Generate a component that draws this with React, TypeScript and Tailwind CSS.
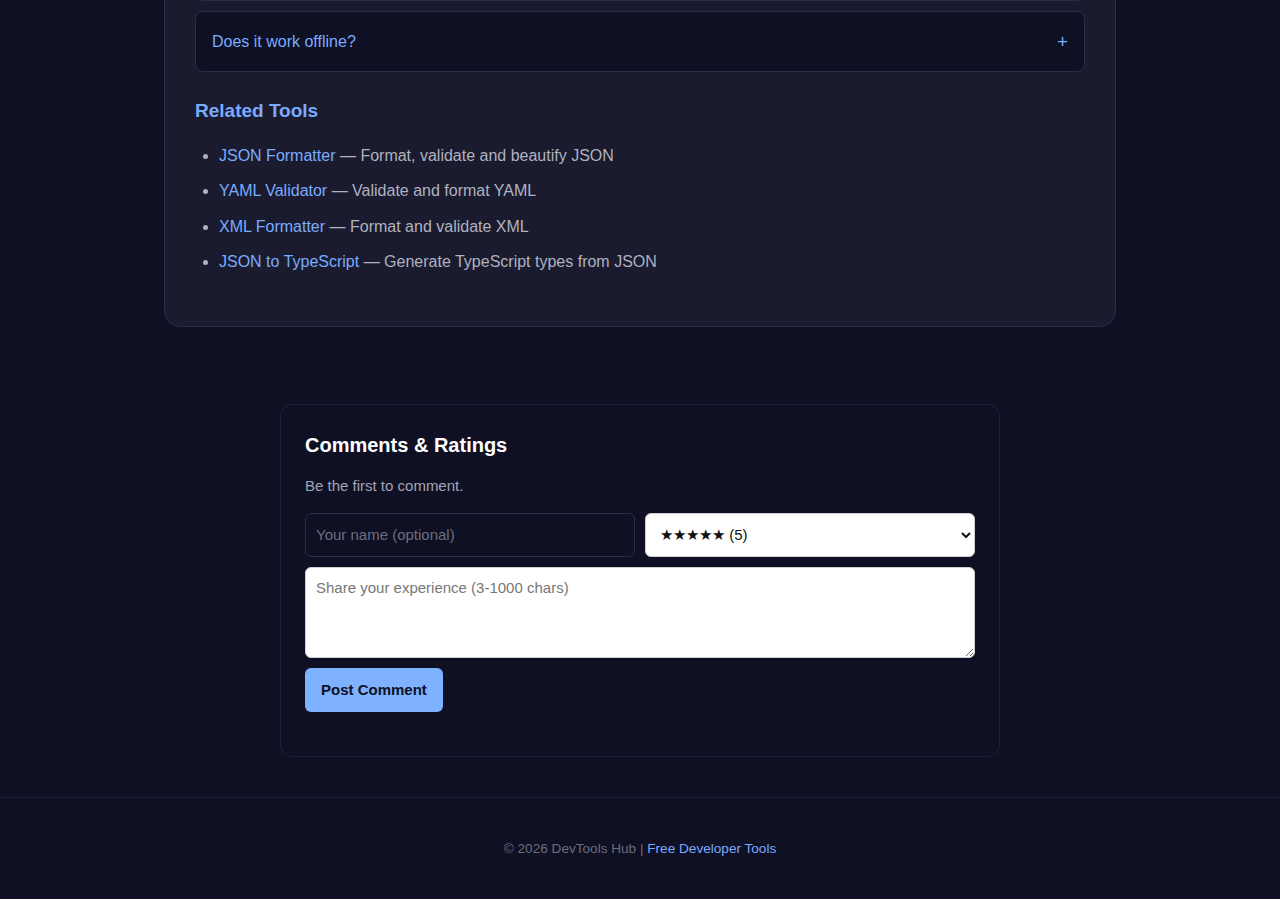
import React from "react";

const relatedTools = [
  { name: "JSON Formatter", desc: "Format, validate and beautify JSON" },
  { name: "YAML Validator", desc: "Validate and format YAML" },
  { name: "XML Formatter", desc: "Format and validate XML" },
  { name: "JSON to TypeScript", desc: "Generate TypeScript types from JSON" },
];

const FaqItem = ({ question }: { question?: string }) => (
  <div className="flex h-[61px] items-center justify-between rounded-[8px] border border-[#2a2c48] bg-[#0e1024] px-4">
    {question && (
      <>
        <span className="text-[16px] text-[#7aabff]">{question}</span>
        <span className="text-[19px] leading-none text-[#7aabff]">+</span>
      </>
    )}
  </div>
);

const App = () => {
  return (
    <div className="min-h-[900px] bg-[#0f1023] font-['Liberation_Sans',Arial,sans-serif]">
      {/* page is scrolled: top of the tool card sits above the viewport */}
      <div className="mx-auto -mt-[90px] w-[952px] rounded-[16px] border border-[#2a2c48] bg-[#1a1b2e] px-[30px] pt-[29px] pb-[41px]">
        <div className="flex flex-col gap-[10px]">
          <FaqItem />
          <FaqItem question="Does it work offline?" />
        </div>

        <h2 className="mt-[27px] text-[19px] font-bold leading-[24px] text-[#7aabff]">
          Related Tools
        </h2>
        <ul className="mt-[20px] list-disc pl-[24px] text-[16px] leading-[25.6px] text-[#b0b2c0] marker:text-[#b0b2c0]">
          {relatedTools.map((tool) => (
            <li key={tool.name} className="mb-[9.8px]">
              <a href="#" className="text-[#7aabff]">
                {tool.name}
              </a>{" "}
              — {tool.desc}
            </li>
          ))}
        </ul>
      </div>

      <div className="mx-auto mt-[77px] w-[720px] rounded-[12px] border border-[#1f2139] bg-[#0f1023] px-6 pt-[24px] pb-[44px]">
        <h3 className="text-[20px] font-bold leading-[32px] text-white">
          Comments &amp; Ratings
        </h3>
        <p className="mt-[14px] text-[15px] leading-[22px] text-[#a3a5b5]">
          Be the first to comment.
        </p>

        <div className="mt-[16px] grid grid-cols-2 gap-[10px]">
          <input
            type="text"
            placeholder="Your name (optional)"
            className="h-[44px] rounded-[6px] border border-[#2b2d45] bg-[#0f1023] px-[10px] text-[15px] text-white placeholder:text-[#6b6e80] outline-none"
          />
          <select
            defaultValue="5"
            className="h-[44px] rounded-[6px] border border-[#d0d0d0] bg-white px-[10px] text-[15px] text-[#111]"
          >
            <option value="5">★★★★★ (5)</option>
            <option value="4">★★★★☆ (4)</option>
            <option value="3">★★★☆☆ (3)</option>
            <option value="2">★★☆☆☆ (2)</option>
            <option value="1">★☆☆☆☆ (1)</option>
          </select>
        </div>

        <textarea
          placeholder="Share your experience (3-1000 chars)"
          className="mt-[10px] block h-[91px] w-full rounded-[6px] border border-[#d0d0d0] bg-white px-[10px] py-[10px] text-[15px] leading-[20px] text-[#111] placeholder:text-[#777] outline-none"
        />

        <button className="mt-[10px] h-[44px] rounded-[6px] bg-[#7eb1ff] px-4 pt-[2px] text-[15px] font-bold text-[#0f1023]">
          Post Comment
        </button>
      </div>

      <footer className="mt-[40px] border-t border-[#1c1e35] pt-[41px] pb-[40px] text-center text-[13.6px] leading-[20px] text-[#6b6d7d]">
        © 2026 DevTools Hub |{" "}
        <a href="#" className="text-[#7aabff]">
          Free Developer Tools
        </a>
      </footer>
    </div>
  );
};

export default App;
